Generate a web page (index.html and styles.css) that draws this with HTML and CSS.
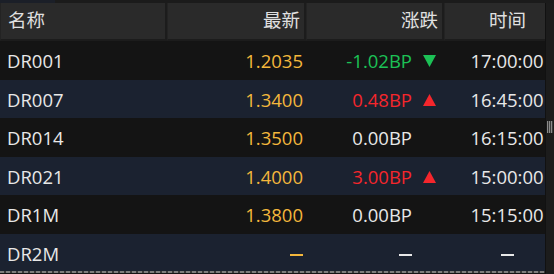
FILE: index.html
```html
<!DOCTYPE html>
<html lang="zh">
<head>
<meta charset="utf-8">
<link rel="stylesheet" href="styles.css">
</head>
<body>
<div class="app">
  <div class="topbar"><span class="topbar-tab"></span></div>
  <div class="main">
    <div class="table">
      <div class="head">
        <div class="hcell c-name">名称</div>
        <div class="hcell c-last">最新</div>
        <div class="hcell c-chg">涨跌</div>
        <div class="hcell c-time">时间</div>
      </div>
      <div class="row dark">
        <div class="cell c-name">DR001</div>
        <div class="cell c-last yellow">1.2035</div>
        <div class="cell c-chg"><span class="val green">-1.02BP</span><span class="tri"><svg width="13" height="12" viewBox="0 0 13 12"><polygon points="0,0 13,0 6.5,12" fill="#1cc156"/></svg></span></div>
        <div class="cell c-time">17:00:00</div>
      </div>
      <div class="row blue">
        <div class="cell c-name">DR007</div>
        <div class="cell c-last yellow">1.3400</div>
        <div class="cell c-chg"><span class="val red">0.48BP</span><span class="tri"><svg width="13" height="12" viewBox="0 0 13 12"><polygon points="6.5,0 13,12 0,12" fill="#f5262c"/></svg></span></div>
        <div class="cell c-time">16:45:00</div>
      </div>
      <div class="row dark">
        <div class="cell c-name">DR014</div>
        <div class="cell c-last yellow">1.3500</div>
        <div class="cell c-chg"><span class="val">0.00BP</span><span class="tri"></span></div>
        <div class="cell c-time">16:15:00</div>
      </div>
      <div class="row blue">
        <div class="cell c-name">DR021</div>
        <div class="cell c-last yellow">1.4000</div>
        <div class="cell c-chg"><span class="val red">3.00BP</span><span class="tri"><svg width="13" height="12" viewBox="0 0 13 12"><polygon points="6.5,0 13,12 0,12" fill="#f5262c"/></svg></span></div>
        <div class="cell c-time">15:00:00</div>
      </div>
      <div class="row dark">
        <div class="cell c-name">DR1M</div>
        <div class="cell c-last yellow">1.3800</div>
        <div class="cell c-chg"><span class="val">0.00BP</span><span class="tri"></span></div>
        <div class="cell c-time">15:15:00</div>
      </div>
      <div class="row blue last">
        <div class="cell c-name">DR2M</div>
        <div class="cell c-last"><span class="dash"></span></div>
        <div class="cell c-chg"><span class="dash white"></span><span class="tri"></span></div>
        <div class="cell c-time"><span class="dash white"></span></div>
      </div>
      <div class="dashes"></div>
    </div>
    <div class="scrollbar"><div class="grip"></div></div>
  </div>
</div>
</body>
</html>
```

FILE: styles.css
```css
html, body {
  margin: 0;
  padding: 0;
  background: #141414;
  overflow: hidden;
}
.app {
  width: 554px;
  height: 274px;
  display: flex;
  flex-direction: column;
  font-family: "Open Sans", "Noto Sans CJK SC", sans-serif;
  font-size: 18.5px;
  color: #e8e8e8;
}
.topbar {
  height: 3px;
  background: #1b1b1b;
  display: flex;
}
.topbar-tab {
  width: 55px;
  background: #1b1f28;
}
.main {
  flex: 1;
  display: flex;
  min-height: 0;
}
.table {
  width: 545px;
  display: flex;
  flex-direction: column;
}
.head, .row {
  display: grid;
  grid-template-columns: 167px 139px 138px 101px;
}
.head {
  height: 38px;
  background: #1c1c1c;
}
.hcell {
  background: #2a2a2a;
  border-right: 2px solid #1c1c1c;
  border-bottom: 2px solid #1c1c1c;
  border-left: 1px solid #232323;
  display: flex;
  align-items: center;
  line-height: 1;
  padding-bottom: 1px;
  color: #e0e0e0;
}
.hcell.c-name { padding-left: 7px; }
.hcell.c-last { justify-content: flex-end; padding-right: 4px; }
.hcell.c-chg { justify-content: flex-end; padding-right: 4px; }
.hcell.c-time { justify-content: center; padding-left: 25px; border-right: 0; }
.row {
  height: 38.6px;
  align-items: center;
}
.row.dark { background: #141414; }
.row.blue { background: #1b2230; }
.row.last {
  height: 37px;
  padding-top: 2px;
  box-sizing: border-box;
}
.cell {
  display: flex;
  align-items: center;
  line-height: 1;
  padding-top: 2px;
}
.c-name { padding-left: 7px; }
.cell.c-last { justify-content: flex-end; padding-right: 3px; }
.cell.c-chg { justify-content: flex-end; padding-right: 8px; gap: 11px; }
.cell.c-time { justify-content: center; padding-left: 25px; }
.tri {
  width: 13px;
  height: 12px;
  display: flex;
}
.yellow { color: #f4b73c; }
.green { color: #1cc156; }
.red { color: #f5262c; }
.dash {
  display: block;
  width: 13px;
  height: 2px;
  background: #f4b73c;
  margin-top: 2px;
}
.dash.white { background: #e8e8e8; }
.dashes {
  height: 2px;
  background: repeating-linear-gradient(to right, #7c7c7c 0 4px, #3a3a3a 4px 6px);
}
.scrollbar {
  flex: 1;
  background: #1c1c1c;
  border-left: 1px solid #111;
  padding-top: 118px;
  display: flex;
  justify-content: center;
}
.grip {
  width: 6px;
  height: 12px;
  background: repeating-linear-gradient(to right, #8a8a8a 0 1px, #3a3a3a 1px 2px);
}
```
